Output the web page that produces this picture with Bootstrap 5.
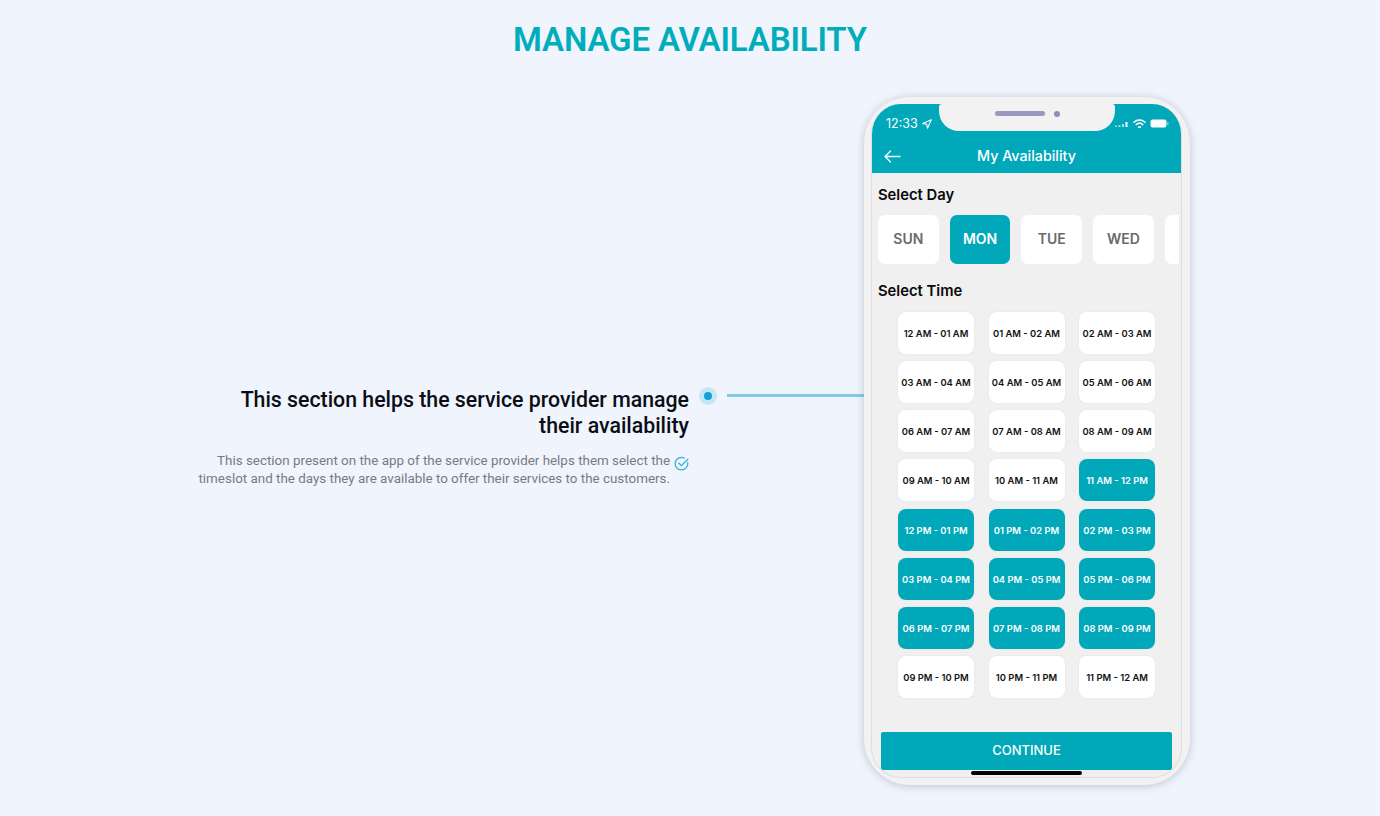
<!DOCTYPE html>
<html lang="en">
<head>
  <meta charset="UTF-8" />
  <meta name="viewport" content="width=device-width, initial-scale=1" />
  <title>Manage Availability</title>
  <link href="https://cdn.jsdelivr.net/npm/bootstrap@5.3.3/dist/css/bootstrap.min.css" rel="stylesheet" />
  <style>
    body { background: #f0f4fd; font-family: Roboto, sans-serif; min-height: 816px; overflow: hidden; }
    .page-title { color: #00adbb; font-family: Roboto, sans-serif; font-weight: 600; font-size: 33px; line-height: 40px; letter-spacing: -.15px; margin: 0; padding-top: 20px; height: 97px; text-align: center; }
    .feature-row { padding-left: 197px; }
    .feature-text { width: 492px; margin-top: 290px; text-align: right; }
    .feature-head { color: #0b0d14; font-size: 21.3px; line-height: 25.5px; font-weight: 500; margin: 0 0 14px; }
    .feature-body { width: 492px; }
    .feature-body p { color: #777b85; font-size: 13.4px; line-height: 18px; width: 472px; margin: 0; white-space: nowrap; }
    .check-ico { width: 15px; height: 15px; margin-top: 4px; }
    .marker-wrap { width: 175px; margin-top: 290px; height: 18px; padding-left: 10px; }
    .marker-dot { width: 18px; height: 18px; border-radius: 50%; background: #c5e6f5; }
    .marker-dot span { width: 8px; height: 8px; border-radius: 50%; background: #12a3d4; }
    .marker-line { height: 3px; background: #7fcbe6; width: 137px; margin-left: 10px; margin-top: 7px; }

    .phone { width: 326px; height: 688px; background: #f2f2f2; border-radius: 46px; padding: 7px 8px 7px 7px; box-shadow: 0 1px 9px rgba(100,105,135,.35); position: relative; }
    .screen { height: 100%; background: #f0f0f0; border-radius: 30px; border: 1px solid #dedede; border-top: 0; overflow: hidden; position: relative; font-family: Inter, sans-serif; }
    .app-head { background: #00a8b9; height: 69px; color: #fff; margin: 0 -1px; }
    .status-row { height: 30px; padding: 9px 13px 0 15px; font-size: 12.5px; line-height: 16px; }
    .title-row { height: 39px; padding: 5px 13px 0; }
    .title-row span { font-size: 14.3px; font-weight: 500; flex: 1; text-align: center; padding-right: 17px; }
    .notch { position: absolute; top: 0; left: 67px; width: 176px; height: 27px; padding-top: 7px; background: #f2f2f2; border-radius: 3px 3px 20px 20px; gap: 9px; }
    .notch-pill { width: 50px; height: 5px; border-radius: 3px; background: #9999c0; }
    .notch-cam { width: 6px; height: 6px; border-radius: 50%; background: #8f8fb5; }
    .sect-label { font-size: 14.8px; font-weight: 600; line-height: 18px; color: #0a0a0a; padding-left: 6px; }
    .day-label { margin-top: 13px; }
    .time-label { margin-top: 18px; }
    .day-row { padding-left: 6px; gap: 11px; margin: 11px 2px 0 0; overflow: hidden; }
    .day-tile { flex: 0 0 60.7px; height: 49px; padding-bottom: 2px; background: #fff; border-radius: 7px; font-size: 14px; font-weight: 600; color: #6a6a6a; }
    .day-on { background: #00a8b9; color: #fff; }
    .slot-grid { display: grid; grid-template-columns: repeat(3, 76px); gap: 7.15px 14.5px; padding-left: 26px; margin-top: 12px; }
    .slot-tile { height: 42px; padding-top: 2px; background: #fff; border-radius: 8px; font-size: 9.4px; font-weight: 600; color: #111; white-space: nowrap; box-shadow: 0 0 3px rgba(0,0,0,.05); }
    .slot-on { background: #00a8b9; color: #fff; }
    .continue-btn { position: absolute; left: 9px; right: 9px; bottom: 7px; height: 38px; background: #00a8b9; color: #fff; font-size: 13px; font-weight: 500; border-radius: 2px; }
    .home-bar { position: absolute; left: 99px; bottom: 2px; width: 111px; height: 4px; border-radius: 2px; background: #000; }
  </style>
</head>
<body>
  <h1 class="page-title">MANAGE AVAILABILITY</h1>

  <div class="d-flex align-items-start feature-row">
    <div class="feature-text">
      <h2 class="feature-head">This section helps the service provider manage their availability</h2>
      <div class="feature-body d-flex justify-content-end gap-1">
        <p>This section present on the app of the service provider helps them select the<br />timeslot and the days they are available to offer their services to the customers.</p>
        <svg class="check-ico flex-shrink-0" viewBox="0 0 16 16" fill="none" stroke="#2db4dc" stroke-width="1.4" stroke-linecap="round" stroke-linejoin="round"><path d="M14.6 7.2A6.7 6.7 0 1 1 11 2.2"/><path d="M5 7.5l2.8 2.8L14.8 3.4"/></svg>
      </div>
    </div>
    <div class="marker-wrap d-flex align-items-start">
      <div class="marker-dot d-flex align-items-center justify-content-center"><span></span></div>
      <div class="marker-line"></div>
    </div>

    <div class="phone">
      <div class="screen">
        <div class="app-head">
          <div class="status-row d-flex justify-content-between">
            <div class="d-flex align-items-center gap-1">12:33
              <svg width="10" height="10" viewBox="0 0 10 10" fill="none" stroke="#fff" stroke-width="1.1" stroke-linejoin="round"><path d="M9.3.7L.8 4.6l3.9.7.8 3.9z"/></svg>
            </div>
            <div class="d-flex align-items-center gap-1">
              <svg width="14" height="6" viewBox="0 0 14 6" fill="#fff"><rect x="0" y="4.5" width="2" height="1.5" opacity=".6"/><rect x="3.5" y="4" width="2" height="2" opacity=".6"/><rect x="7" y="3" width="2" height="3" opacity=".6"/><rect x="10.5" y="1" width="2" height="5"/></svg>
              <svg width="13" height="10" viewBox="0 0 13 10" fill="none" stroke="#fff" stroke-width="1.5" stroke-linecap="round"><path d="M1 3.3a8 8 0 0 1 11 0"/><path d="M3.2 5.6a5 5 0 0 1 6.6 0"/><path d="M5.6 8.2a1.4 1.4 0 0 1 1.8 0"/></svg>
              <svg width="19" height="9" viewBox="0 0 19 9"><rect x=".5" y=".5" width="16" height="8" rx="2" fill="#fff"/><rect x="17.4" y="3" width="1" height="3" fill="#fff" opacity=".6"/></svg>
            </div>
          </div>
          <div class="title-row d-flex align-items-center">
            <svg width="17" height="13" viewBox="0 0 17 13" fill="none" stroke="#fff" stroke-width="1.3" stroke-linecap="round" stroke-linejoin="round"><path d="M16 6.5H1M6.5 1L1 6.5 6.5 12"/></svg>
            <span>My Availability</span>
          </div>
        </div>
        <div class="notch d-flex align-items-start justify-content-center">
          <div class="notch-pill"></div><div class="notch-cam"></div>
        </div>

        <div class="sect-label day-label">Select Day</div>
        <div class="day-row d-flex">
          <div class="day-tile d-flex align-items-center justify-content-center">SUN</div>
          <div class="day-tile day-on d-flex align-items-center justify-content-center">MON</div>
          <div class="day-tile d-flex align-items-center justify-content-center">TUE</div>
          <div class="day-tile d-flex align-items-center justify-content-center">WED</div>
          <div class="day-tile"></div>
        </div>

        <div class="sect-label time-label">Select Time</div>
        <div class="slot-grid">
          <div class="slot-tile d-flex align-items-center justify-content-center">12 AM - 01 AM</div>
          <div class="slot-tile d-flex align-items-center justify-content-center">01 AM - 02 AM</div>
          <div class="slot-tile d-flex align-items-center justify-content-center">02 AM - 03 AM</div>
          <div class="slot-tile d-flex align-items-center justify-content-center">03 AM - 04 AM</div>
          <div class="slot-tile d-flex align-items-center justify-content-center">04 AM - 05 AM</div>
          <div class="slot-tile d-flex align-items-center justify-content-center">05 AM - 06 AM</div>
          <div class="slot-tile d-flex align-items-center justify-content-center">06 AM - 07 AM</div>
          <div class="slot-tile d-flex align-items-center justify-content-center">07 AM - 08 AM</div>
          <div class="slot-tile d-flex align-items-center justify-content-center">08 AM - 09 AM</div>
          <div class="slot-tile d-flex align-items-center justify-content-center">09 AM - 10 AM</div>
          <div class="slot-tile d-flex align-items-center justify-content-center">10 AM - 11 AM</div>
          <div class="slot-tile slot-on d-flex align-items-center justify-content-center">11 AM - 12 PM</div>
          <div class="slot-tile slot-on d-flex align-items-center justify-content-center">12 PM - 01 PM</div>
          <div class="slot-tile slot-on d-flex align-items-center justify-content-center">01 PM - 02 PM</div>
          <div class="slot-tile slot-on d-flex align-items-center justify-content-center">02 PM - 03 PM</div>
          <div class="slot-tile slot-on d-flex align-items-center justify-content-center">03 PM - 04 PM</div>
          <div class="slot-tile slot-on d-flex align-items-center justify-content-center">04 PM - 05 PM</div>
          <div class="slot-tile slot-on d-flex align-items-center justify-content-center">05 PM - 06 PM</div>
          <div class="slot-tile slot-on d-flex align-items-center justify-content-center">06 PM - 07 PM</div>
          <div class="slot-tile slot-on d-flex align-items-center justify-content-center">07 PM - 08 PM</div>
          <div class="slot-tile slot-on d-flex align-items-center justify-content-center">08 PM - 09 PM</div>
          <div class="slot-tile d-flex align-items-center justify-content-center">09 PM - 10 PM</div>
          <div class="slot-tile d-flex align-items-center justify-content-center">10 PM - 11 PM</div>
          <div class="slot-tile d-flex align-items-center justify-content-center">11 PM - 12 AM</div>
        </div>

        <div class="continue-btn d-flex align-items-center justify-content-center">CONTINUE</div>
        <div class="home-bar"></div>
      </div>
    </div>
  </div>

  <script src="https://cdn.jsdelivr.net/npm/bootstrap@5.3.3/dist/js/bootstrap.bundle.min.js"></script>
</body>
</html>
